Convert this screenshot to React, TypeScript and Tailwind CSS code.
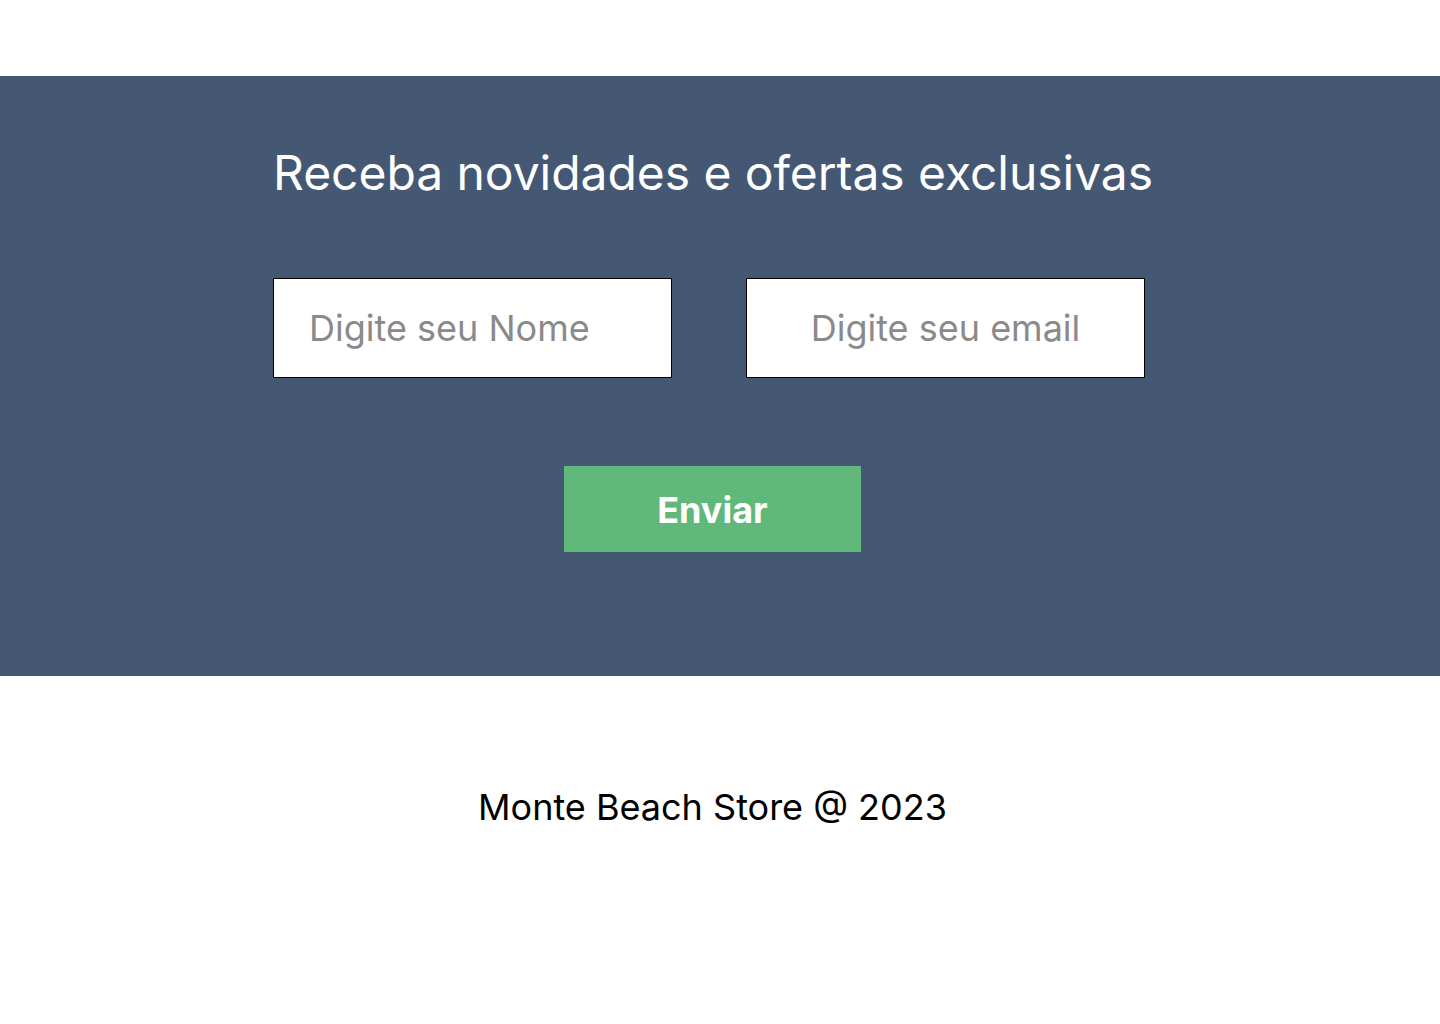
export default function App() {
  return (
    <div className="min-h-[1024px] bg-white font-['Inter',sans-serif]">
      <div className="h-[76px]" />

      <section className="bg-[#445873] h-[600px] pl-[273px] pt-[68px]">
        <div className="w-[879px] flex flex-col">
          <h2 className="text-[48px] leading-[58px] font-normal text-white whitespace-nowrap tracking-[-0.05px]">
            Receba novidades e ofertas exclusivas
          </h2>

          <form className="flex flex-col items-center mt-[76px]">
            <div className="flex gap-[74px] self-start">
              <input
                type="text"
                name="name"
                placeholder="Digite seu Nome"
                className="w-[399px] h-[100px] border border-black bg-white pl-[35px] text-[36px] text-black placeholder:text-[#8a8a8a] outline-none"
              />
              <input
                type="email"
                name="email"
                placeholder="Digite seu email"
                className="w-[399px] h-[100px] border border-black bg-white text-center text-[36px] text-black placeholder:text-[#8a8a8a] outline-none"
              />
            </div>

            <button
              type="submit"
              className="mt-[88px] w-[297px] h-[86px] bg-[#60b97a] text-white text-[36px] leading-[44px] font-bold pt-[1px]"
            >
              Enviar
            </button>
          </form>
        </div>
      </section>

      <footer className="pl-[273px] pt-[109px]">
        <p className="w-[879px] text-center text-[36px] leading-[44px] text-black">
          Monte Beach Store @ 2023
        </p>
      </footer>
    </div>
  );
}
